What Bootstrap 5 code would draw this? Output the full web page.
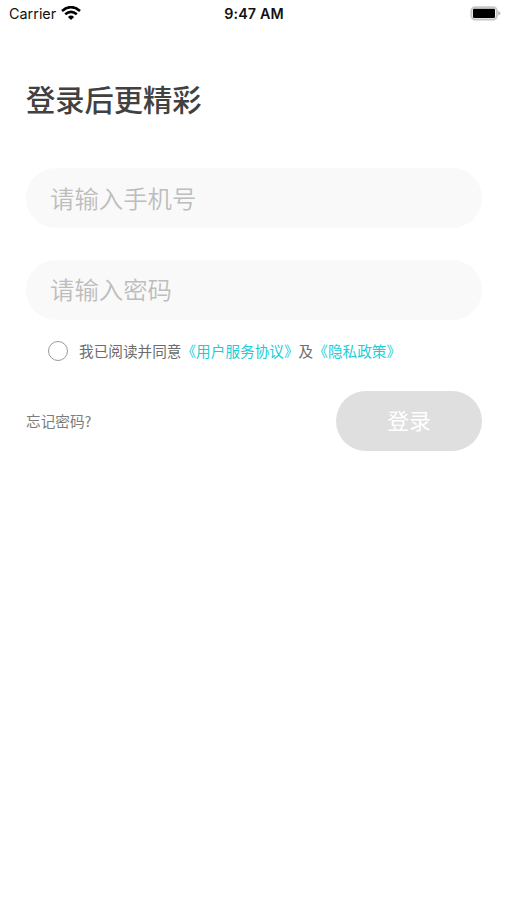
<!DOCTYPE html>
<html lang="zh-CN">
<head>
<meta charset="utf-8">
<meta name="viewport" content="width=device-width, initial-scale=1">
<title>登录</title>
<link href="https://cdn.jsdelivr.net/npm/bootstrap@5.3.0/dist/css/bootstrap.min.css" rel="stylesheet">
<style>
body{font-family:"Noto Sans CJK SC",sans-serif;color:#414141;background:#fff;min-height:900px}
.status{height:27px;font-family:Inter,sans-serif;font-size:14.4px;line-height:27px;color:#111;padding:0 7px 0 9px}
.status .side{flex:1 1 0}
.status .side:last-child{margin-right:-1px}
.status .clock{font-weight:600;font-size:14.3px;letter-spacing:.1px;margin-left:-2px}
.login{padding:51px 25px 0 26px}
.title{font-size:29.25px;font-weight:500;line-height:40px;margin:0 0 50px}
.field.form-control{height:60px;background:#f9f9f9;font-size:24.4px;font-weight:350;padding:0 24px;line-height:60px;margin-bottom:32px}
.field.form-control[type=password]{padding:0 24px 2px}
.field.form-control::placeholder{color:#bdbdbd;opacity:1}
.agree{font-size:14.65px;line-height:22px;color:#6c6c6c;padding-left:22px;margin-top:-12px}
.agree .form-check-input{width:20px;height:20px;border:1.5px solid #999;margin:0 11px 0 0}
.agree a{color:#1bced6}
.forgot{font-size:14.65px;line-height:22px;color:#7c7c7c}
.actions{margin-top:29px}
.submit.btn{width:146px;height:60px;background:#dfdfdf;color:#fff;font-size:21.8px;line-height:58px;padding:0 0 2px;border:0}
</style>
</head>
<body>
<header class="status d-flex align-items-center">
  <div class="side d-flex align-items-center">
    <span>Carrier</span>
    <svg class="ms-1" width="22" height="16" viewBox="0 0 22 16" fill="none" stroke="#000" stroke-width="2.6"><path d="M2 5Q11 -2.7 20 5M5.2 8.3Q11 3.4 16.8 8.3"/><path d="M11 14 7.9 10.9Q11 8.3 14.1 10.9Z" fill="#000" stroke="none"/></svg>
  </div>
  <span class="clock">9:47 AM</span>
  <div class="side d-flex justify-content-end">
    <svg width="31" height="15" viewBox="0 0 31 15"><rect x="1.4" y="1.2" width="25.4" height="12.4" rx="3.8" fill="#fff" stroke="#c6c6c6" stroke-width="2"/><rect x="3" y="2.8" width="22" height="9.2" rx="1.2"/><path d="M28.3 5Q30.4 6 30.4 7.3T28.3 9.6Z" fill="#b5b5b5"/></svg>
  </div>
</header>
<main class="login">
  <h1 class="title">登录后更精彩</h1>
  <form>
    <input class="field form-control rounded-pill border-0" type="tel" placeholder="请输入手机号" aria-label="手机号">
    <input class="field form-control rounded-pill border-0" type="password" placeholder="请输入密码" aria-label="密码">
    <div class="agree d-flex align-items-center text-nowrap">
      <input class="form-check-input rounded-circle flex-shrink-0" type="checkbox" id="agree">
      <label for="agree">我已阅读并同意<a class="text-decoration-none" href="#">《用户服务协议》</a>及<a class="text-decoration-none" href="#">《隐私政策》</a></label>
    </div>
    <div class="actions d-flex align-items-center justify-content-between">
      <a class="forgot text-decoration-none" href="#">忘记密码?</a>
      <button class="submit btn rounded-pill" type="button">登录</button>
    </div>
  </form>
</main>
<script src="https://cdn.jsdelivr.net/npm/bootstrap@5.3.0/dist/js/bootstrap.bundle.min.js"></script>
</body>
</html>
